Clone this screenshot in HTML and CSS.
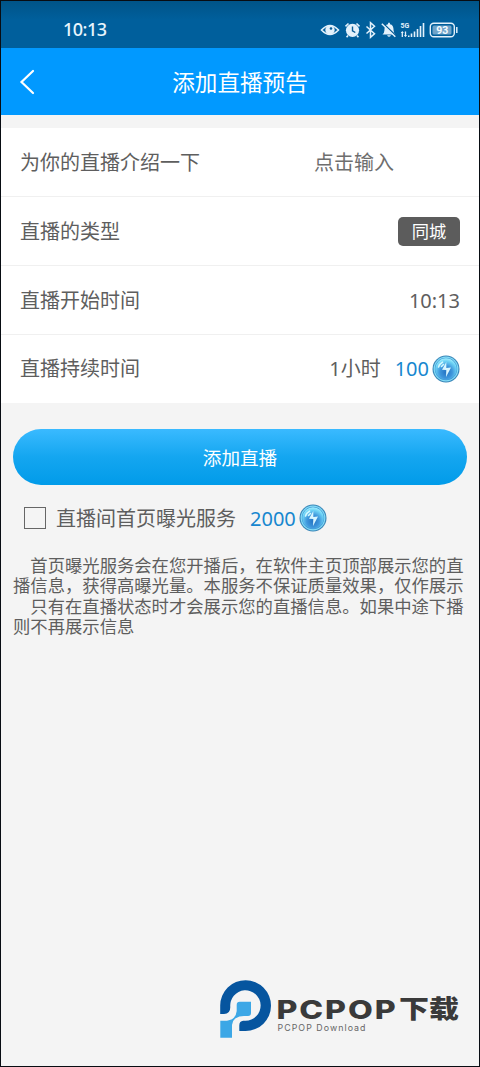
FILE: index.html
```html
<!DOCTYPE html>
<html lang="zh-CN">
<head>
<meta charset="utf-8">
<title>添加直播预告</title>
<link rel="stylesheet" href="styles.css">
</head>
<body>
<svg class="defs" width="0" height="0" aria-hidden="true">
  <defs>
    <radialGradient id="coinFill" cx="50%" cy="65%" r="65%">
      <stop offset="0" stop-color="#2373c4"/>
      <stop offset="0.45" stop-color="#3f97dc"/>
      <stop offset="0.8" stop-color="#6fd4f6"/>
      <stop offset="1" stop-color="#a5f0fd"/>
    </radialGradient>
    <symbol id="coin" viewBox="0 0 28 28">
      <circle cx="14" cy="14" r="13.5" fill="#3a86b8"/>
      <circle cx="14" cy="14" r="12.4" fill="#84dcf6"/>
      <circle cx="14" cy="14" r="11.2" fill="#3b95d6"/>
      <circle cx="14" cy="14" r="10.7" fill="url(#coinFill)"/>
      <path d="M14.300 7 10 14.700l4.300.4-.3 6.900 5-9.500-4.700.4z" fill="#d9f6ff"/>
      <path d="M6.500 12q1.200-3.500 4-4.800M9.500 11.500l2-2" stroke="#d3f8ff" stroke-width="1.600" stroke-linecap="round" fill="none"/>
    </symbol>
  </defs>
</svg>
<div class="screen">
  <div class="status">
    <span class="clock">10:13</span>
    <svg class="status-icons" width="140" height="20" viewBox="0 0 140 20">
      <g fill="none" stroke="#e3f1fb" stroke-width="1.600">
        <path d="M1.500 10Q10 1 18.500 10 10 19 1.500 10z"/>
        <circle cx="10" cy="10" r="3.900" fill="#e3f1fb"/>
        <path d="M25.500 6.300l3-2.800M36.500 3.500l3 2.800M28 15.500l-1.400 1.700M37 15.500l1.400 1.700"/>
      </g>
      <circle cx="11" cy="8.500" r="1.300" fill="#075c96"/>
      <circle cx="32.500" cy="10.300" r="6.600" fill="#e3f1fb"/>
      <path d="M32.500 6.500v4.300l2.800 1.700" fill="none" stroke="#075c96" stroke-width="1.400"/>
      <path d="M46.500 6.500l8 7.200-4 3.600V2.600l4 3.600-8 7.300" fill="none" stroke="#e3f1fb" stroke-width="1.500"/>
      <path d="M62.500 14.500q1.900-1.800 1.900-4 0-5.700 3.600-6.200l.2-1.500h1.600l.2 1.500q3.600.5 3.600 6.200 0 2.200 1.900 4zM67 15.300h4q-2 3-4 0z" fill="#e3f1fb"/>
      <path d="M63.500 3.800l13 12.600" stroke="#075c96" stroke-width="1.500"/>
      <path d="M61.800 3.800l13.500 13" stroke="#e3f1fb" stroke-width="1.500"/>
      <text x="80.600" y="8.200" class="net">5G</text>
      <path d="M82.300 17v-5M85.500 11.500v5" stroke="#e3f1fb" stroke-width="1.300"/>
      <path d="M80.800 13l1.500-2 1.500 2zM84 15l1.500 2 1.500-2zM88 15.500h1.500v1.500H88z" fill="#e3f1fb"/>
      <path d="M91.500 17v-3.500M94.500 17v-5.500M97.500 17V9M100.500 17V6M103.500 17V3" stroke="#e3f1fb" stroke-width="1.600"/>
      <rect x="110.300" y="3.300" width="24" height="13.400" rx="3.500" fill="none" stroke="#e3f1fb" stroke-width="1.400"/>
      <rect x="112.500" y="5.500" width="19" height="9" rx="1.500" fill="#6fa3c8"/>
      <path d="M136.800 7v6" stroke="#e3f1fb" stroke-width="1.500"/>
      <text x="122.300" y="13.800" text-anchor="middle" class="level">93</text>
    </svg>
  </div>
  <header class="header">
    <svg class="back" width="16" height="26" viewBox="0 0 16 26"><path d="M14 2 2.500 13 14 24" fill="none" stroke="#fff" stroke-width="2.200" stroke-linecap="round"/></svg>
    <h1 class="title">添加直播预告</h1>
  </header>
  <main>
    <div class="form">
      <div class="row"><span>为你的直播介绍一下</span><span class="entry">点击输入</span></div>
      <div class="row"><span>直播的类型</span><span class="tag">同城</span></div>
      <div class="row"><span>直播开始时间</span><span class="time">10:13</span></div>
      <div class="row"><span>直播持续时间</span><span class="price-group"><span>1小时</span><span class="price">100</span><svg class="coin"><use href="#coin"/></svg></span></div>
    </div>
    <button class="submit">添加直播</button>
    <div class="service">
      <span class="checkbox"></span><span>直播间首页曝光服务</span><span class="price">2000</span><svg class="coin"><use href="#coin"/></svg>
    </div>
    <p class="note">　首页曝光服务会在您开播后，在软件主页顶部展示您的直<br>播信息，获得高曝光量。本服务不保证质量效果，仅作展示<br>　只有在直播状态时才会展示您的直播信息。如果中途下播<br>则不再展示信息</p>
  </main>
  <footer class="brand">
    <svg width="242" height="60" viewBox="0 0 242 60">
      <path d="M1.200 34V25.500A25.400 25.400 0 1 1 26.500 51H20.300V45.500q0-4.500 4-4.800h2.200A15.200 15.200 0 1 0 11.300 27Q11.300 34 5 34z" fill="#06559f"/>
      <path d="M20.700 21.700H32V33q0 3-3 3h-4Q13.500 36.500 13 45v12.700H1.300V40.700H8Q17 39.500 17.700 31V24.700q0-3 3-3z" fill="#3ca7e6"/>
      <text x="57.500" y="38.500" class="brand-name" textLength="121" lengthAdjust="spacingAndGlyphs">PCPOP</text>
      <text x="180" y="38.300" class="brand-cn" textLength="60" lengthAdjust="spacingAndGlyphs">下载</text>
      <text x="58.500" y="51" class="brand-sub" textLength="88">PCPOP Download</text>
    </svg>
  </footer>
</div>
</body>
</html>
```
FILE: styles.css
```css
* { box-sizing: border-box; }
body { margin: 0; }
.defs { display: block; }
.screen {
  display: flex;
  flex-direction: column;
  width: 480px;
  height: 1067px;
  border: 1px solid #080c12;
  background: #f4f4f4;
  color: #5e5e5e;
  font: 20px/28px "Noto Sans", "Noto Sans CJK SC", sans-serif;
  white-space: nowrap;
}
.status {
  display: flex;
  align-items: center;
  justify-content: space-between;
  height: 47px;
  padding: 10px 19px 0 62px;
  background: linear-gradient(#005488, #005f9c 40%);
  color: #e9f5fd;
}
.clock { font-size: 18px; font-weight: 500; letter-spacing: -0.5px; line-height: 26px; padding-bottom: 2px; }
.net { font: bold 7px "Roboto", sans-serif; fill: #e3f1fb; }
.level { font: bold 10.5px "Roboto", sans-serif; fill: #f4faff; }
.header {
  display: grid;
  grid-template-columns: 60px 1fr 60px;
  align-items: center;
  height: 67px;
  background: #0199ff;
  color: #fff;
}
.back { margin-left: 18px; }
.title { margin: 2px 0 0; font-size: 22.6px; font-weight: 400; text-align: center; }
.form { margin-top: 13px; background: #fff; }
.row {
  display: flex;
  align-items: center;
  justify-content: space-between;
  height: 69px;
  padding: 2px 19px 0;
  border-bottom: 1px solid #f0f0f0;
}
.row:last-child { height: 68px; padding-top: 0; border-bottom: 0; }
.entry { margin-right: 66px; color: #6e6e6e; }
.tag {
  width: 62px;
  height: 29px;
  margin-bottom: 2px;
  border-radius: 5px;
  background: #5c5c5c;
  color: #fff;
  font-size: 17.3px;
  line-height: 30px;
  text-align: center;
}
.price-group, .service { display: flex; align-items: center; }
.price { margin: 0 3px 0 14px; color: #1787cf; }
.coin { width: 28px; height: 28px; }
.submit {
  display: block;
  width: 454px;
  height: 56px;
  margin: 26px 0 0 12px;
  padding-top: 2px;
  border: 0;
  border-radius: 28px;
  background: linear-gradient(#3abaff, #14a6f0 50%, #019be9);
  color: #fff;
  font: inherit;
  font-size: 18.6px;
}
.service { margin: 18px 0 0 23px; }
.service span:not(.checkbox) { padding-top: 2px; }
.checkbox { width: 22px; height: 22px; margin-right: 10px; border: 1.5px solid #666; }
.note { margin: 22px 0 0 12px; font-size: 17.33px; line-height: 20.4px; }
.brand { margin: auto 19px 26px 218px; height: 60px; }
.brand-name { font: 800 25.5px "Inter", sans-serif; letter-spacing: 1.5px; fill: #3a3a3a; }
.brand-cn { font: 900 25px "Noto Sans CJK SC", sans-serif; fill: #3a3a3a; }
.brand-sub { font: 8.8px "Inter", sans-serif; fill: #666; }
```
